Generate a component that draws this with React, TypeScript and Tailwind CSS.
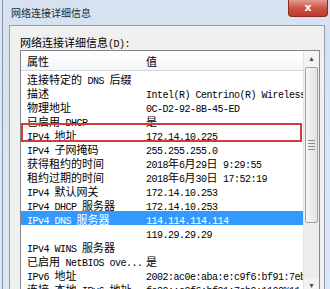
import React from 'react';

const rows: [string, string][] = [
  ['连接特定的 DNS 后缀', ''],
  ['描述', 'Intel(R) Centrino(R) Wireless-N 1030'],
  ['物理地址', '0C-D2-92-8B-45-ED'],
  ['已启用 DHCP', '是'],
  ['IPv4 地址', '172.14.10.225'],
  ['IPv4 子网掩码', '255.255.255.0'],
  ['获得租约的时间', '2018年6月29日 9:29:55'],
  ['租约过期的时间', '2018年6月30日 17:52:19'],
  ['IPv4 默认网关', '172.14.10.253'],
  ['IPv4 DHCP 服务器', '172.14.10.253'],
  ['IPv4 DNS 服务器', '114.114.114.114'],
  ['', '119.29.29.29'],
  ['IPv4 WINS 服务器', ''],
  ['已启用 NetBIOS ove...', '是'],
  ['IPv6 地址', '2002:ac0e:aba:e:c9f6:bf91:7eb9'],
  ['连接-本地 IPv6 地址', 'fe80::c9f6:bf91:7eb9:1109%11'],
];

// SimSun-ish look: narrow mono for ASCII runs, CJK font for the rest
function Mixed({ text }: { text: string }) {
  const parts = text.match(/[\x00-\x7F]+|[^\x00-\x7F]+/g) ?? [];
  return (
    <>
      {parts.map((p, i) =>
        /^[\x00-\x7F]/.test(p) ? (
          <span key={i} className="font-['Liberation_Mono',monospace] text-[10px] leading-[14px] tracking-[-0.5px]">
            {p}
          </span>
        ) : (
          <span key={i} className="font-['Noto_Sans_CJK_SC',sans-serif] text-[11px] leading-[14px]">
            {p}
          </span>
        )
      )}
    </>
  );
}

export default function App() {
  return (
    <div className="relative w-[330px] h-[289px] overflow-hidden bg-[#dbe6f2] pl-[2px]">
      <div className="flex flex-col h-full border-l border-[#8796aa] bg-gradient-to-b from-[#d6e2f0] to-[#dce7f3]">
        {/* title bar */}
        <div className="h-[25px] shrink-0 flex items-center pl-[8px] pt-[1px] text-[#1e2a3a]">
          <span className="font-['Noto_Sans_CJK_SC',sans-serif] text-[10px] leading-none">网络连接详细信息</span>
        </div>

        {/* client area */}
        <div className="flex-1 ml-[6px] mr-[5px] border border-[#8fa0b5] bg-[#f0f0f0] flex flex-col pl-[10px] pr-[4px] pt-[8px] text-black">
          <div className="h-[14px] leading-[14px] whitespace-pre">
            <Mixed text="网络连接详细信息(D):" />
          </div>

          <div className="mt-[2px] h-[245px] shrink-0 border border-[#828790] bg-white flex">
            <div className="flex-1 flex flex-col min-w-0">
              <div className="h-[20px] shrink-0 flex items-center border-b border-[#d5d5d5] bg-gradient-to-b from-white to-[#f5f6f7]">
                <div className="w-[125px] pl-[6px] leading-[14px]">
                  <Mixed text="属性" />
                </div>
                <div className="leading-[14px]">
                  <Mixed text="值" />
                </div>
              </div>
              {rows.map(([k, v], i) => (
                <div
                  key={i}
                  className={
                    i === 10
                      ? 'h-[14px] shrink-0 flex bg-[#3399ff] text-white'
                      : 'h-[14px] shrink-0 flex text-black'
                  }
                >
                  <div className="w-[125px] shrink-0 pl-[6px] leading-[14px] whitespace-pre">
                    <Mixed text={k} />
                  </div>
                  <div className="flex-1 min-w-0 leading-[14px] whitespace-pre overflow-x-clip">
                    <Mixed text={v} />
                  </div>
                </div>
              ))}
            </div>

            {/* scrollbar */}
            <div className="w-[16px] shrink-0 flex flex-col bg-[#ececec] border-l border-[#e3e3e3]">
              <div className="h-[16px] shrink-0 flex items-center justify-center text-[7px] text-[#4d4d4d] bg-[#f4f4f4]">
                ▲
              </div>
              <div className="h-[156px] shrink-0 mx-[1px] rounded-[2px] border border-[#a3a3a3] bg-gradient-to-r from-[#f6f6f6] to-[#e2e2e2] flex flex-col items-center justify-center gap-[2px]">
                <div className="w-[7px] h-px bg-[#8a8a8a]" />
                <div className="w-[7px] h-px bg-[#8a8a8a]" />
                <div className="w-[7px] h-px bg-[#8a8a8a]" />
                <div className="w-[7px] h-px bg-[#8a8a8a]" />
              </div>
              <div className="flex-1" />
              <div className="h-[16px] shrink-0 flex items-center justify-center text-[7px] text-[#4d4d4d] bg-[#f4f4f4]">
                ▼
              </div>
            </div>
          </div>
        </div>
      </div>

      {/* close button */}
      <div className="absolute top-0 right-[2px] w-[40px] h-[17px] rounded-b-[4px] border border-t-0 border-[#8a2a22] bg-gradient-to-b from-[#e3998d] via-[#cf5545] to-[#c0392b] flex items-center justify-center">
        <span className="font-['DejaVu_Sans',sans-serif] text-[11px] font-bold leading-none text-white -mt-[1px]">x</span>
      </div>

      {/* red annotation box */}
      <div className="absolute left-[21px] top-[123px] w-[281px] h-[19px] border-2 border-[#d33b3b]" />
    </div>
  );
}
